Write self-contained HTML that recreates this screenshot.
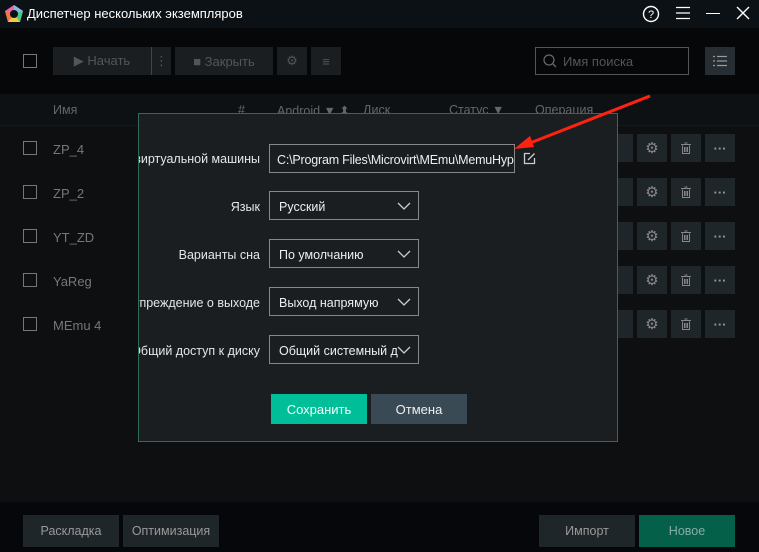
<!DOCTYPE html><html><head><meta charset="utf-8"><style>
*{margin:0;padding:0;box-sizing:border-box}
body{width:759px;height:552px;overflow:hidden;background:#0d0f11;font-family:"Liberation Sans","DejaVu Sans",sans-serif;font-size:13px;position:relative;color:#ddd}
.a{position:absolute}
.btn{position:absolute;background:#1f262a;color:#555;display:flex;align-items:center;justify-content:center}
.cb{position:absolute;width:14px;height:14px;border:1px solid #777}
.lbl{position:absolute;color:#e6e6e6;text-align:right;white-space:nowrap;font-size:12.5px}
.sel{position:absolute;left:269px;width:150px;height:29px;border:1px solid #888;color:#eee;padding-left:9px;line-height:30px;font-size:12.5px;white-space:nowrap;overflow:hidden}
.sel svg{position:absolute;right:7px;top:10px}
</style></head><body>
<div class="a" style="left:0;top:0;width:759px;height:28px;background:#0c1116"></div>
<svg class="a" style="left:4px;top:4px" width="20" height="20" viewBox="0 0 20 20"><polygon points="10,1 19,7 16,18 4,18 1,7" fill="#e6a"/><polygon points="10,1 19,7 10,10" fill="#8bd"/><polygon points="19,7 16,18 10,10" fill="#4c8"/><polygon points="16,18 4,18 10,10" fill="#ec4"/><polygon points="4,18 1,7 10,10" fill="#e74"/><circle cx="10" cy="10" r="4" fill="#0c1116"/></svg>
<div class="a" style="left:27px;top:6px;color:#fff;font-size:13px">Диспетчер нескольких экземпляров</div>
<svg class="a" style="left:642px;top:5px" width="18" height="18" viewBox="0 0 18 18"><circle cx="9" cy="9" r="7.5" fill="none" stroke="#fff" stroke-width="1.4"/><text x="9" y="13" text-anchor="middle" fill="#fff" font-size="11" font-family="Liberation Sans">?</text></svg>
<svg class="a" style="left:675px;top:6px" width="16" height="14"><path d="M1 1.5H15M1 7H15M1 12.5H15" stroke="#fff" stroke-width="1.3"/></svg>
<div class="a" style="left:706px;top:13px;width:14px;height:1.3px;background:#fff"></div>
<svg class="a" style="left:736px;top:6px" width="14" height="14"><path d="M1 1L13 13M13 1L1 13" stroke="#fff" stroke-width="1.4"/></svg>
<div class="a" style="left:0;top:28px;width:759px;height:66px;background:#050709"></div>
<div class="cb" style="left:23px;top:54px"></div>
<div class="btn" style="left:53px;top:47px;width:98px;height:28px;background:#1a1e21">▶ Начать</div>
<div class="a" style="left:151px;top:47px;width:1px;height:28px;background:#444"></div>
<div class="btn" style="left:152px;top:47px;width:19px;height:28px;background:#1a1e21">⋮</div>
<div class="btn" style="left:175px;top:47px;width:98px;height:28px;background:#1a1e21">■ Закрыть</div>
<div class="btn" style="left:277px;top:47px;width:30px;height:28px;background:#1a1e21">⚙</div>
<div class="btn" style="left:311px;top:47px;width:30px;height:28px;background:#1a1e21">≡</div>
<div class="a" style="left:535px;top:47px;width:154px;height:28px;border:1px solid #555;color:#555;padding:6px 0 0 27px">Имя поиска</div>
<svg class="a" style="left:543px;top:54px" width="14" height="14"><circle cx="6" cy="6" r="5" fill="none" stroke="#666" stroke-width="1.3"/><path d="M10 10L13 13" stroke="#666" stroke-width="1.3"/></svg>
<div class="btn" style="left:705px;top:47px;width:30px;height:28px;background:#262e33"><svg width="14" height="12"><path d="M0 1.5H2M4 1.5H14M0 6H2M4 6H14M0 10.5H2M4 10.5H14" stroke="#999" stroke-width="1.2"/></svg></div>
<div class="a" style="left:0;top:94px;width:759px;height:31px;background:#0e1114;color:#666;font-size:12.5px">
<span class="a" style="left:53px;top:9px">Имя</span><span class="a" style="left:238px;top:9px">#</span><span class="a" style="left:277px;top:9px">Android ▼ ⬍</span><span class="a" style="left:363px;top:9px">Диск</span><span class="a" style="left:449px;top:9px">Статус ▼</span><span class="a" style="left:535px;top:9px">Операция</span></div>
<div class="a" style="left:0;top:125px;width:759px;height:1px;background:#15191c"></div>
<div id="rows"></div>
<script>
var n=["ZP_4","ZP_2","YT_ZD","YaReg","MEmu 4"],h="";
for(var i=0;i<5;i++){var y=134+i*44;
h+='<div class="cb" style="left:23px;top:'+(y+7)+'px"></div><div class="a" style="left:53px;top:'+(y+8)+'px;color:#777">'+n[i]+'</div>';
h+='<div class="btn" style="left:600px;top:'+y+'px;width:33px;height:28px"></div><div class="btn" style="left:637px;top:'+y+'px;width:30px;height:28px;color:#888;font-size:15px">⚙</div><div class="btn" style="left:671px;top:'+y+'px;width:30px;height:28px"><svg width="12" height="12"><path d="M1 2.5H11M4.5 1H7.5M2.5 3.5V11.5H9.5V3.5M4.5 5V10M6 5V10M7.5 5V10" stroke="#888" fill="none"/></svg></div><div class="btn" style="left:705px;top:'+y+'px;width:30px;height:28px;color:#999;font-weight:bold">···</div>';}
document.getElementById('rows').innerHTML=h;
</script>
<div class="a" style="left:0;top:502px;width:759px;height:50px;background:#05070a"></div>
<div class="btn" style="left:23px;top:515px;width:96px;height:32px;color:#999;font-size:12.5px">Раскладка</div>
<div class="btn" style="left:123px;top:515px;width:96px;height:32px;color:#999;font-size:12.5px">Оптимизация</div>
<div class="btn" style="left:539px;top:515px;width:96px;height:32px;color:#999;font-size:12.5px">Импорт</div>
<div class="btn" style="left:639px;top:515px;width:96px;height:32px;background:#046048;color:#8aa;font-size:12.5px">Новое</div>
<div class="a" style="left:138px;top:113px;width:480px;height:329px;background:#1a1e21;border:1px solid #2e6b5a;overflow:hidden">
<div class="lbl" style="left:-200px;width:321px;top:38px">Путь к виртуальной машины</div>
<div class="lbl" style="left:-200px;width:321px;top:86px">Язык</div>
<div class="lbl" style="left:-200px;width:321px;top:134px">Варианты сна</div>
<div class="lbl" style="left:-200px;width:321px;top:182px">Предупреждение о выходе</div>
<div class="lbl" style="left:-200px;width:321px;top:230px">Общий доступ к диску</div>
</div>
<div class="sel" style="top:144px;width:246px;padding-left:7px;letter-spacing:-0.2px">C:\Program Files\Microvirt\MEmu\MemuHyperv</div>
<svg class="a" style="left:523px;top:152px" width="13" height="13"><path d="M7 1.5H1.5V11.5H11.5V6M5 8L11.5 1.5" stroke="#ccc" stroke-width="1.3" fill="none"/></svg>
<div class="sel" style="top:191px">Русский<svg width="14" height="8"><path d="M1 1L7 7L13 1" stroke="#ccc" fill="none" stroke-width="1.3"/></svg></div>
<div class="sel" style="top:239px">По умолчанию<svg width="14" height="8"><path d="M1 1L7 7L13 1" stroke="#ccc" fill="none" stroke-width="1.3"/></svg></div>
<div class="sel" style="top:287px">Выход напрямую<svg width="14" height="8"><path d="M1 1L7 7L13 1" stroke="#ccc" fill="none" stroke-width="1.3"/></svg></div>
<div class="sel" style="top:335px">Общий системный д<svg width="14" height="8" style="background:#1a1e21"><path d="M1 1L7 7L13 1" stroke="#ccc" fill="none" stroke-width="1.3"/></svg></div>
<div class="btn" style="left:271px;top:394px;width:96px;height:30px;background:#00bf98;color:#eefff8">Сохранить</div>
<div class="btn" style="left:371px;top:394px;width:96px;height:30px;background:#3a4a55;color:#eee">Отмена</div>
<svg class="a" style="left:0;top:0" width="759" height="552"><path d="M650 96L525 145" stroke="#f21" stroke-width="3"/><polygon points="514,149 530,136 534,147" fill="#f21"/></svg>
</body></html>
